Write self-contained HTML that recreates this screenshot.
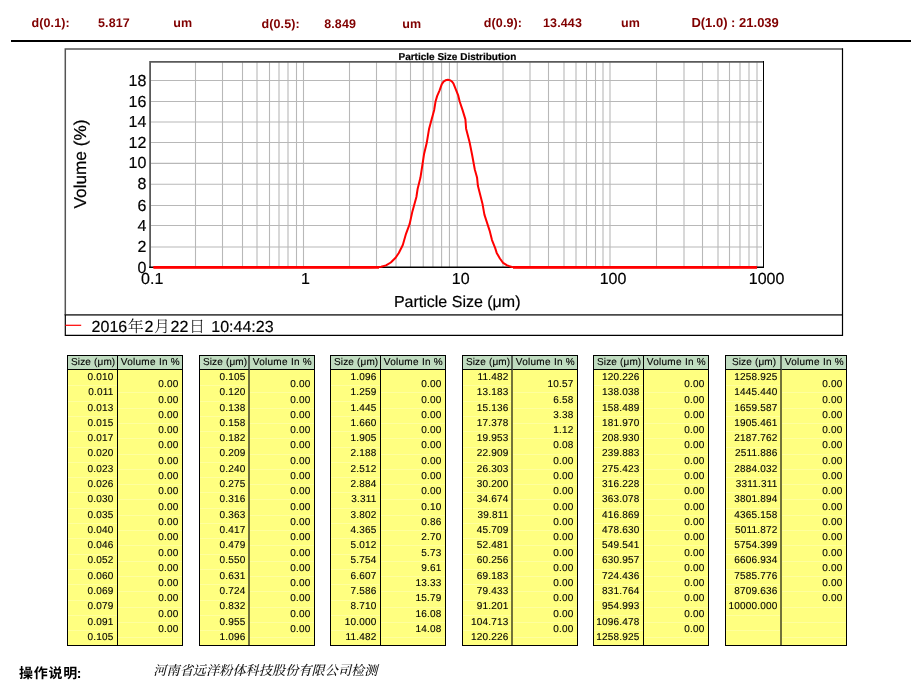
<!DOCTYPE html>
<html lang="zh-CN">
<head>
<meta charset="utf-8">
<title>Particle Size Distribution</title>
<style>
html,body{margin:0;padding:0;background:#fff;}
body{width:914px;height:688px;position:relative;overflow:hidden;font-family:"Liberation Sans","Noto Sans CJK SC",sans-serif;color:#000;}
.page{position:absolute;left:0;top:0;width:914px;height:688px;overflow:hidden;will-change:transform;text-rendering:geometricPrecision;}
.stat{position:absolute;top:0;left:0;width:914px;height:42px;color:#800000;font-weight:bold;font-size:12.5px;line-height:14px;letter-spacing:0.12px;}
.stat span{position:absolute;white-space:nowrap;}
.rule{position:absolute;left:11px;top:40px;width:900px;height:2px;background:#000;}
.chart{position:absolute;left:0;top:0;}
.tbl{position:absolute;top:355px;height:291px;box-sizing:border-box;background:#ffff80;border:1px solid #000;font-size:10px;letter-spacing:0.2px;color:#000;overflow:hidden;-webkit-text-stroke:0.12px #000;}
.hd{position:absolute;top:-1px;height:15px;line-height:13px;box-sizing:border-box;background:#c0dcc0;border:1px solid #000;text-align:center;white-space:nowrap;}
.hs{left:-1px;letter-spacing:0.15px;text-indent:1.4px;}
.hv{border-left-width:0;letter-spacing:0.29px;text-indent:0.8px;}
.col{position:absolute;top:14px;bottom:0;box-sizing:border-box;text-align:right;}
.col::before{content:"";position:absolute;left:0;right:0;bottom:0;background:repeating-linear-gradient(to bottom,rgba(255,255,255,0) 0,rgba(255,255,255,0) 14.3px,rgba(255,255,255,0.24) 14.3px,rgba(255,255,255,0.24) 15.3px);}
.col.s{border-right:1px solid #000;padding-right:3.5px;}
.col.s::before{top:0.6px;}
.col.v{padding-right:3.4px;}
.col.v::before{top:7.5px;}
.soft .hs,.soft .col.s{border-right:2px solid rgba(0,0,0,0.55);}
.soft .col.s{padding-right:2.5px;}
.soft .hs{text-indent:2.2px;}
.r{height:15.3px;line-height:15.3px;white-space:nowrap;position:relative;}
.col.s .r{top:-0.1px;}
.col.v .r{top:7.3px;}
.foot1{position:absolute;left:19px;top:664px;font-weight:700;font-size:14px;letter-spacing:0.75px;line-height:18px;font-family:"Liberation Sans","Noto Sans CJK SC",sans-serif;white-space:nowrap;}
.foot2{position:absolute;left:153.3px;top:662px;font-style:italic;font-weight:500;font-size:13.2px;line-height:18px;font-family:"Liberation Serif","Noto Serif CJK SC",serif;color:#111;white-space:nowrap;}
</style>
</head>
<body>
<div class="page">
<div class="stat">
<span style="left:31.5px;top:15.7px">d(0.1):</span>
<span style="left:98px;top:15.7px">5.817</span>
<span style="left:173.2px;top:15.7px">um</span>
<span style="left:261.5px;top:16.5px">d(0.5):</span>
<span style="left:324.2px;top:16.5px">8.849</span>
<span style="left:402.2px;top:16.5px">um</span>
<span style="left:483.8px;top:15.7px">d(0.9):</span>
<span style="left:543px;top:15.7px">13.443</span>
<span style="left:621px;top:15.7px">um</span>
<span style="left:691.4px;top:16.2px;font-size:13px;letter-spacing:0">D(1.0) : 21.039</span>
</div>
<div class="rule"></div>
<svg class="chart" width="914" height="688" viewBox="0 0 914 688">
<path d="M65.3 315V48.9H842.5" fill="none" stroke="#555" stroke-width="1.5"/>
<path d="M64.7 314.9H842.5" fill="none" stroke="#4a4a4a" stroke-width="1.6"/>
<path d="M842.5 48.2V335.3H65.3V314.5" fill="none" stroke="#000" stroke-width="1.2"/>
<g stroke="#b8b8b8" stroke-width="1.1" fill="none">
<line x1="195.5" y1="62.1" x2="195.5" y2="267.4"/>
<line x1="222.5" y1="62.1" x2="222.5" y2="267.4"/>
<line x1="242.5" y1="62.1" x2="242.5" y2="267.4"/>
<line x1="257.0" y1="62.1" x2="257.0" y2="267.4"/>
<line x1="269.5" y1="62.1" x2="269.5" y2="267.4"/>
<line x1="279.0" y1="62.1" x2="279.0" y2="267.4"/>
<line x1="288.0" y1="62.1" x2="288.0" y2="267.4"/>
<line x1="296.5" y1="62.1" x2="296.5" y2="267.4"/>
<line x1="303.5" y1="62.1" x2="303.5" y2="267.4"/>
<line x1="349.5" y1="62.1" x2="349.5" y2="267.4"/>
<line x1="376.5" y1="62.1" x2="376.5" y2="267.4"/>
<line x1="396.0" y1="62.1" x2="396.0" y2="267.4"/>
<line x1="410.5" y1="62.1" x2="410.5" y2="267.4"/>
<line x1="423.25" y1="62.1" x2="423.25" y2="267.4"/>
<line x1="432.95" y1="62.1" x2="432.95" y2="267.4"/>
<line x1="441.6" y1="62.1" x2="441.6" y2="267.4"/>
<line x1="449.45" y1="62.1" x2="449.45" y2="267.4"/>
<line x1="457.25" y1="62.1" x2="457.25" y2="267.4"/>
<line x1="503.0" y1="62.1" x2="503.0" y2="267.4"/>
<line x1="530.0" y1="62.1" x2="530.0" y2="267.4"/>
<line x1="548.5" y1="62.1" x2="548.5" y2="267.4"/>
<line x1="564.0" y1="62.1" x2="564.0" y2="267.4"/>
<line x1="576.0" y1="62.1" x2="576.0" y2="267.4"/>
<line x1="586.5" y1="62.1" x2="586.5" y2="267.4"/>
<line x1="595.5" y1="62.1" x2="595.5" y2="267.4"/>
<line x1="603.0" y1="62.1" x2="603.0" y2="267.4"/>
<line x1="610.0" y1="62.1" x2="610.0" y2="267.4"/>
<line x1="656.5" y1="62.1" x2="656.5" y2="267.4"/>
<line x1="684.0" y1="62.1" x2="684.0" y2="267.4"/>
<line x1="702.5" y1="62.1" x2="702.5" y2="267.4"/>
<line x1="718.0" y1="62.1" x2="718.0" y2="267.4"/>
<line x1="729.5" y1="62.1" x2="729.5" y2="267.4"/>
<line x1="740.0" y1="62.1" x2="740.0" y2="267.4"/>
<line x1="749.0" y1="62.1" x2="749.0" y2="267.4"/>
<line x1="757.0" y1="62.1" x2="757.0" y2="267.4"/>
<line x1="150.2" y1="80.5" x2="762" y2="80.5"/>
<line x1="150.2" y1="101.5" x2="762" y2="101.5"/>
<line x1="150.2" y1="122.0" x2="762" y2="122.0"/>
<line x1="150.2" y1="142.5" x2="762" y2="142.5"/>
<line x1="150.2" y1="163.4" x2="762" y2="163.4"/>
<line x1="150.2" y1="184.2" x2="762" y2="184.2"/>
<line x1="150.2" y1="205.5" x2="762" y2="205.5"/>
<line x1="150.2" y1="225.5" x2="762" y2="225.5"/>
<line x1="150.2" y1="247.0" x2="762" y2="247.0"/>
</g>
<path d="M150.1 267.9V61.9H763.5" fill="none" stroke="#5a5a5a" stroke-width="1.8"/>
<path d="M149.2 267.3H764" fill="none" stroke="#000" stroke-width="1.4"/>
<path d="M763.5 61V267.5" fill="none" stroke="#000" stroke-width="1"/>
<polyline points="153.6,267.3 370.0,267.3 381.2,266.7 386.0,265.4 390.8,262.5 395.6,257.7 398.8,253.0 402.8,245.0 406.0,233.8 409.6,224.2 412.4,211.4 416.4,197.0 417.6,189.0 420.4,177.8 422.4,165.0 424.0,154.3 426.7,143.1 429.1,128.7 431.6,119.4 434.2,109.9 435.6,101.2 437.1,96.1 439.6,90.3 441.8,84.2 443.5,81.6 445.5,80.3 448.0,79.8 450.5,80.4 452.2,81.8 453.4,83.4 455.6,88.9 458.1,95.1 459.6,101.2 462.5,109.9 465.4,119.4 466.1,128.7 469.6,142.3 472.0,154.3 474.8,169.5 477.1,177.8 477.9,185.8 482.4,203.4 484.4,214.6 489.6,230.6 492.0,240.1 495.2,248.1 496.7,252.9 499.9,258.5 503.1,262.8 507.1,265.4 511.9,267.0 520.0,267.3 757.0,267.3" fill="none" stroke="#ff0000" stroke-width="2" stroke-linejoin="round" stroke-linecap="butt"/>
<path d="M153.4 267.4H379M513 267.4H757.1" fill="none" stroke="#ff0000" stroke-width="2.7"/>
<line x1="65.3" y1="325.3" x2="81.2" y2="325.3" stroke="#ff0000" stroke-width="1.2"/>
<g font-family="'Liberation Sans', 'Noto Sans CJK SC', sans-serif" fill="#000" stroke="#000" stroke-width="0.2">
<text x="457.4" y="60.4" font-size="10" font-weight="bold" text-anchor="middle">Particle Size Distribution</text>
<g font-size="16">
<text x="146.4" y="272.5" text-anchor="end">0</text>
<text x="146.4" y="252.2" text-anchor="end">2</text>
<text x="146.4" y="230.7" text-anchor="end">4</text>
<text x="146.4" y="210.7" text-anchor="end">6</text>
<text x="146.4" y="189.2" text-anchor="end">8</text>
<text x="146.4" y="168.2" text-anchor="end">10</text>
<text x="146.4" y="147.7" text-anchor="end">12</text>
<text x="146.4" y="127.2" text-anchor="end">14</text>
<text x="146.4" y="106.7" text-anchor="end">16</text>
<text x="146.4" y="85.7" text-anchor="end">18</text>
<text x="152.2" y="283.7" text-anchor="middle">0.1</text>
<text x="305.4" y="283.7" text-anchor="middle">1</text>
<text x="460.7" y="283.7" text-anchor="middle">10</text>
<text x="613.0" y="283.7" text-anchor="middle">100</text>
<text x="766.6" y="283.7" text-anchor="middle">1000</text>
<text x="457.2" y="306.6" text-anchor="middle">Particle Size (μm)</text>
<text x="91.6" y="332.1" font-size="16" font-family="'Liberation Sans', 'Noto Serif CJK SC', 'Noto Sans CJK SC', sans-serif">2016<tspan dx="0.6" font-weight="300" stroke="none">年</tspan><tspan dx="0.6">2</tspan><tspan dx="0.6" font-weight="300" stroke="none">月</tspan><tspan dx="0.6">22</tspan><tspan dx="0.6" font-weight="300" stroke="none">日</tspan><tspan dx="1.9"> 10:44:23</tspan></text>
</g>
<text transform="translate(86.3 164) rotate(-90)" font-size="17.2" text-anchor="middle">Volume (%)</text>
</g>
</svg>
<div class="tbl" style="left:67px;width:116px">
<div class="hd hs" style="width:51px">Size (μm)</div>
<div class="hd hv" style="left:50px;width:65px">Volume In %</div>
<div class="col s" style="left:0;width:50px">
<div class="r">0.010</div>
<div class="r">0.011</div>
<div class="r">0.013</div>
<div class="r">0.015</div>
<div class="r">0.017</div>
<div class="r">0.020</div>
<div class="r">0.023</div>
<div class="r">0.026</div>
<div class="r">0.030</div>
<div class="r">0.035</div>
<div class="r">0.040</div>
<div class="r">0.046</div>
<div class="r">0.052</div>
<div class="r">0.060</div>
<div class="r">0.069</div>
<div class="r">0.079</div>
<div class="r">0.091</div>
<div class="r">0.105</div>
</div>
<div class="col v" style="left:50px;width:64px">
<div class="r">0.00</div>
<div class="r">0.00</div>
<div class="r">0.00</div>
<div class="r">0.00</div>
<div class="r">0.00</div>
<div class="r">0.00</div>
<div class="r">0.00</div>
<div class="r">0.00</div>
<div class="r">0.00</div>
<div class="r">0.00</div>
<div class="r">0.00</div>
<div class="r">0.00</div>
<div class="r">0.00</div>
<div class="r">0.00</div>
<div class="r">0.00</div>
<div class="r">0.00</div>
<div class="r">0.00</div>
</div>
</div>
<div class="tbl soft" style="left:199px;width:116px">
<div class="hd hs" style="width:51px">Size (μm)</div>
<div class="hd hv" style="left:50px;width:65px">Volume In %</div>
<div class="col s" style="left:0;width:50px">
<div class="r">0.105</div>
<div class="r">0.120</div>
<div class="r">0.138</div>
<div class="r">0.158</div>
<div class="r">0.182</div>
<div class="r">0.209</div>
<div class="r">0.240</div>
<div class="r">0.275</div>
<div class="r">0.316</div>
<div class="r">0.363</div>
<div class="r">0.417</div>
<div class="r">0.479</div>
<div class="r">0.550</div>
<div class="r">0.631</div>
<div class="r">0.724</div>
<div class="r">0.832</div>
<div class="r">0.955</div>
<div class="r">1.096</div>
</div>
<div class="col v" style="left:50px;width:64px">
<div class="r">0.00</div>
<div class="r">0.00</div>
<div class="r">0.00</div>
<div class="r">0.00</div>
<div class="r">0.00</div>
<div class="r">0.00</div>
<div class="r">0.00</div>
<div class="r">0.00</div>
<div class="r">0.00</div>
<div class="r">0.00</div>
<div class="r">0.00</div>
<div class="r">0.00</div>
<div class="r">0.00</div>
<div class="r">0.00</div>
<div class="r">0.00</div>
<div class="r">0.00</div>
<div class="r">0.00</div>
</div>
</div>
<div class="tbl" style="left:330px;width:116px">
<div class="hd hs" style="width:51px">Size (μm)</div>
<div class="hd hv" style="left:50px;width:65px">Volume In %</div>
<div class="col s" style="left:0;width:50px">
<div class="r">1.096</div>
<div class="r">1.259</div>
<div class="r">1.445</div>
<div class="r">1.660</div>
<div class="r">1.905</div>
<div class="r">2.188</div>
<div class="r">2.512</div>
<div class="r">2.884</div>
<div class="r">3.311</div>
<div class="r">3.802</div>
<div class="r">4.365</div>
<div class="r">5.012</div>
<div class="r">5.754</div>
<div class="r">6.607</div>
<div class="r">7.586</div>
<div class="r">8.710</div>
<div class="r">10.000</div>
<div class="r">11.482</div>
</div>
<div class="col v" style="left:50px;width:64px">
<div class="r">0.00</div>
<div class="r">0.00</div>
<div class="r">0.00</div>
<div class="r">0.00</div>
<div class="r">0.00</div>
<div class="r">0.00</div>
<div class="r">0.00</div>
<div class="r">0.00</div>
<div class="r">0.10</div>
<div class="r">0.86</div>
<div class="r">2.70</div>
<div class="r">5.73</div>
<div class="r">9.61</div>
<div class="r">13.33</div>
<div class="r">15.79</div>
<div class="r">16.08</div>
<div class="r">14.08</div>
</div>
</div>
<div class="tbl soft" style="left:462px;width:116px">
<div class="hd hs" style="width:51px">Size (μm)</div>
<div class="hd hv" style="left:50px;width:65px">Volume In %</div>
<div class="col s" style="left:0;width:50px">
<div class="r">11.482</div>
<div class="r">13.183</div>
<div class="r">15.136</div>
<div class="r">17.378</div>
<div class="r">19.953</div>
<div class="r">22.909</div>
<div class="r">26.303</div>
<div class="r">30.200</div>
<div class="r">34.674</div>
<div class="r">39.811</div>
<div class="r">45.709</div>
<div class="r">52.481</div>
<div class="r">60.256</div>
<div class="r">69.183</div>
<div class="r">79.433</div>
<div class="r">91.201</div>
<div class="r">104.713</div>
<div class="r">120.226</div>
</div>
<div class="col v" style="left:50px;width:64px">
<div class="r">10.57</div>
<div class="r">6.58</div>
<div class="r">3.38</div>
<div class="r">1.12</div>
<div class="r">0.08</div>
<div class="r">0.00</div>
<div class="r">0.00</div>
<div class="r">0.00</div>
<div class="r">0.00</div>
<div class="r">0.00</div>
<div class="r">0.00</div>
<div class="r">0.00</div>
<div class="r">0.00</div>
<div class="r">0.00</div>
<div class="r">0.00</div>
<div class="r">0.00</div>
<div class="r">0.00</div>
</div>
</div>
<div class="tbl" style="left:593px;width:116px">
<div class="hd hs" style="width:51px">Size (μm)</div>
<div class="hd hv" style="left:50px;width:65px">Volume In %</div>
<div class="col s" style="left:0;width:50px">
<div class="r">120.226</div>
<div class="r">138.038</div>
<div class="r">158.489</div>
<div class="r">181.970</div>
<div class="r">208.930</div>
<div class="r">239.883</div>
<div class="r">275.423</div>
<div class="r">316.228</div>
<div class="r">363.078</div>
<div class="r">416.869</div>
<div class="r">478.630</div>
<div class="r">549.541</div>
<div class="r">630.957</div>
<div class="r">724.436</div>
<div class="r">831.764</div>
<div class="r">954.993</div>
<div class="r">1096.478</div>
<div class="r">1258.925</div>
</div>
<div class="col v" style="left:50px;width:64px">
<div class="r">0.00</div>
<div class="r">0.00</div>
<div class="r">0.00</div>
<div class="r">0.00</div>
<div class="r">0.00</div>
<div class="r">0.00</div>
<div class="r">0.00</div>
<div class="r">0.00</div>
<div class="r">0.00</div>
<div class="r">0.00</div>
<div class="r">0.00</div>
<div class="r">0.00</div>
<div class="r">0.00</div>
<div class="r">0.00</div>
<div class="r">0.00</div>
<div class="r">0.00</div>
<div class="r">0.00</div>
</div>
</div>
<div class="tbl soft" style="left:725px;width:122px">
<div class="hd hs" style="width:57px">Size (μm)</div>
<div class="hd hv" style="left:56px;width:65px">Volume In %</div>
<div class="col s" style="left:0;width:56px">
<div class="r">1258.925</div>
<div class="r">1445.440</div>
<div class="r">1659.587</div>
<div class="r">1905.461</div>
<div class="r">2187.762</div>
<div class="r">2511.886</div>
<div class="r">2884.032</div>
<div class="r">3311.311</div>
<div class="r">3801.894</div>
<div class="r">4365.158</div>
<div class="r">5011.872</div>
<div class="r">5754.399</div>
<div class="r">6606.934</div>
<div class="r">7585.776</div>
<div class="r">8709.636</div>
<div class="r">10000.000</div>
<div class="r">&nbsp;</div>
<div class="r">&nbsp;</div>
</div>
<div class="col v" style="left:56px;width:64px">
<div class="r">0.00</div>
<div class="r">0.00</div>
<div class="r">0.00</div>
<div class="r">0.00</div>
<div class="r">0.00</div>
<div class="r">0.00</div>
<div class="r">0.00</div>
<div class="r">0.00</div>
<div class="r">0.00</div>
<div class="r">0.00</div>
<div class="r">0.00</div>
<div class="r">0.00</div>
<div class="r">0.00</div>
<div class="r">0.00</div>
<div class="r">0.00</div>
<div class="r">&nbsp;</div>
<div class="r">&nbsp;</div>
</div>
</div>
<div class="foot1">操作说明<span style="margin-left:-1.3px">:</span></div>
<div class="foot2">河南省远洋粉体科技股份有限公司检测</div>
</div>
</body>
</html>
